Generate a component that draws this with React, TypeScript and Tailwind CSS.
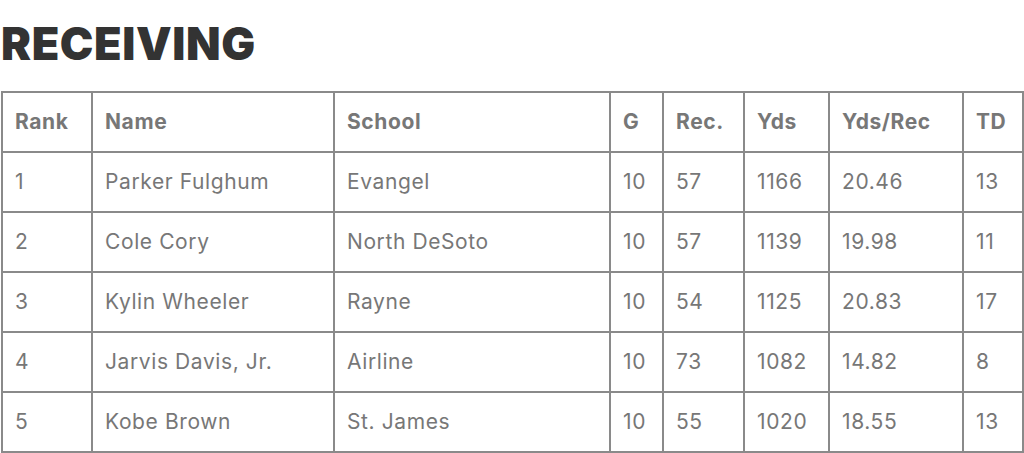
const columns = [
  { label: "Rank", width: "w-[90px]" },
  { label: "Name", width: "w-[242px]" },
  { label: "School", width: "w-[276px]" },
  { label: "G", width: "w-[53px]" },
  { label: "Rec.", width: "w-[81px]" },
  { label: "Yds", width: "w-[85px]" },
  { label: "Yds/Rec", width: "w-[134px]" },
  { label: "TD", width: "w-[60px]" },
]

const rows = [
  ["1", "Parker Fulghum", "Evangel", "10", "57", "1166", "20.46", "13"],
  ["2", "Cole Cory", "North DeSoto", "10", "57", "1139", "19.98", "11"],
  ["3", "Kylin Wheeler", "Rayne", "10", "54", "1125", "20.83", "17"],
  ["4", "Jarvis Davis, Jr.", "Airline", "10", "73", "1082", "14.82", "8"],
  ["5", "Kobe Brown", "St. James", "10", "55", "1020", "18.55", "13"],
]

export default function App() {
  return (
    <div className="bg-white w-[1024px] h-[453px] overflow-hidden pt-[20px] font-['Inter',sans-serif]">
      <h2 className="text-[45px] leading-[48px] font-black tracking-[0.6px] text-[#333] pl-[1px] mb-[23px]">
        RECEIVING
      </h2>
      <table className="border-collapse table-fixed w-[1022px] ml-[1px] text-[#777]">
        <thead>
          <tr className="h-[60px]">
            {columns.map((c) => (
              <th
                key={c.label}
                className={`${c.width} border-2 border-[#8a8a8a] pl-[12px] pr-[4px] text-left text-[21px] font-bold tracking-[0.6px]`}
              >
                {c.label}
              </th>
            ))}
          </tr>
        </thead>
        <tbody>
          {rows.map((r) => (
            <tr key={r[0]} className="h-[60px]">
              {r.map((cell, i) => (
                <td
                  key={i}
                  className="border-2 border-[#8a8a8a] pl-[12px] pr-[4px] text-[21px] font-normal tracking-[0.6px]"
                >
                  {cell}
                </td>
              ))}
            </tr>
          ))}
        </tbody>
      </table>
    </div>
  )
}
